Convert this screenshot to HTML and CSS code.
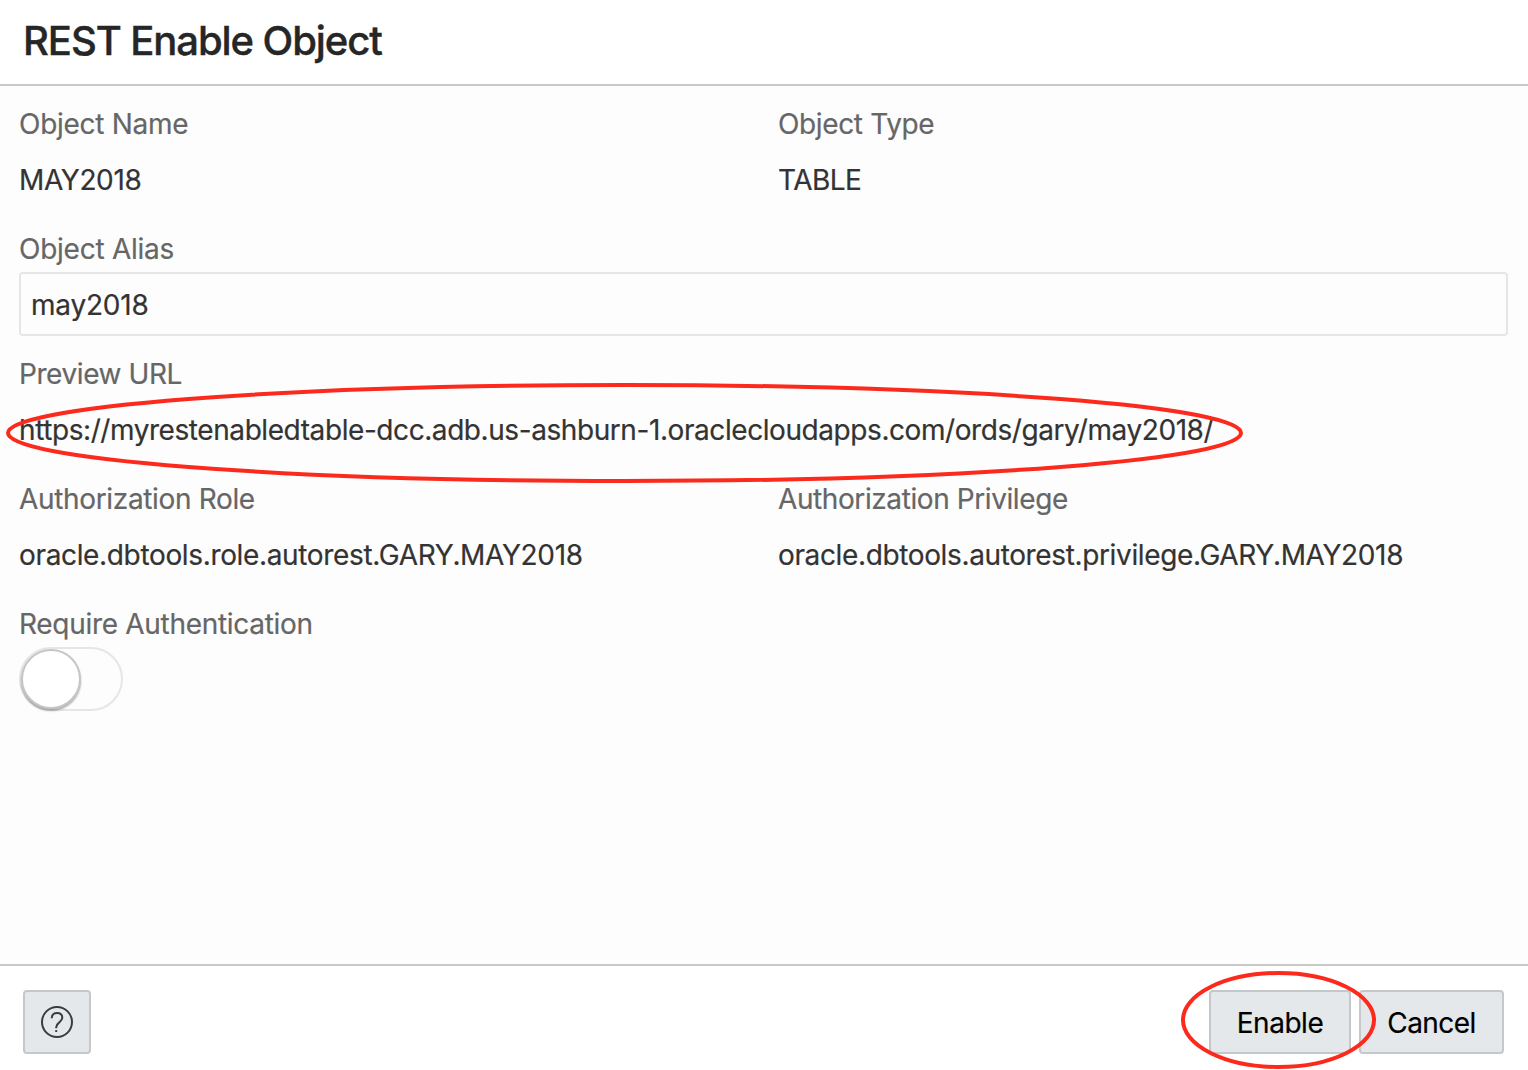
FILE: index.html
```html
<!DOCTYPE html>
<html lang="en">
<head>
<meta charset="utf-8">
<title>REST Enable Object</title>
<link rel="stylesheet" href="styles.css">
</head>
<body>
<div class="dialog">
  <header class="header"><h1 class="title">REST Enable Object</h1></header>
  <main class="form">
    <div class="field">
      <div class="label label-name">Object Name</div>
      <div class="value value-name">MAY2018</div>
    </div>
    <div class="field">
      <div class="label label-type">Object Type</div>
      <div class="value value-type">TABLE</div>
    </div>
    <div class="field wide">
      <label class="label label-alias" for="alias">Object Alias</label>
      <input class="input" id="alias" type="text" value="may2018">
    </div>
    <div class="field wide">
      <div class="label label-url">Preview URL</div>
      <div class="value value-url">https://myrestenabledtable-dcc.adb.us-ashburn-1.oraclecloudapps.com/ords/gary/may2018/</div>
      <svg class="mark mark-url" viewBox="0 0 1240 102"><ellipse cx="619.5" cy="51" rx="616.5" ry="48"/></svg>
    </div>
    <div class="field">
      <div class="label label-role">Authorization Role</div>
      <div class="value value-role">oracle.dbtools.role.autorest.GARY.MAY2018</div>
    </div>
    <div class="field">
      <div class="label label-privilege">Authorization Privilege</div>
      <div class="value value-privilege">oracle.dbtools.autorest.privilege.GARY.MAY2018</div>
    </div>
    <div class="field wide">
      <div class="label label-auth">Require Authentication</div>
      <div class="switch"><span class="thumb"></span></div>
    </div>
  </main>
  <footer class="footer">
    <button class="button help" aria-label="Help">
      <svg class="help-icon" viewBox="0 0 32 32"><circle cx="16" cy="16" r="15"/><path d="M10.8 12.3V11.7C10.8 8.9 13 7.1 16 7.1C19.2 7.1 21.3 9 21.3 11.8C21.3 16.3 15.2 16.5 15.2 21.2V22.2"/><path d="M15.2 24.1V26"/></svg>
    </button>
    <div class="actions">
      <button class="button enable">Enable</button>
      <button class="button cancel">Cancel</button>
      <svg class="mark mark-enable" viewBox="0 0 196 100"><ellipse cx="98.5" cy="50" rx="95.5" ry="47"/></svg>
    </div>
  </footer>
</div>
</body>
</html>
```
FILE: styles.css
```css
* { box-sizing: border-box; }
body {
  margin: 0;
  font-family: Inter, "Liberation Sans", sans-serif;
  font-size: 28px;
  -webkit-text-stroke: 0.2px;
  color: #333;
  background: #fff;
}
.dialog { display: flex; flex-direction: column; height: 1070px; overflow: hidden; }
.header { height: 86px; padding: 17px 23px 0; border-bottom: 2px solid #c9c9c9; }
.title {
  margin: 0;
  font-size: 40px;
  line-height: 48px;
  font-weight: 500;
  -webkit-text-stroke: 0.4px;
  letter-spacing: -1.08px;
  color: #262626;
  white-space: nowrap;
}
.form {
  flex: 1;
  display: grid;
  grid-template-columns: 730px 730px;
  grid-auto-rows: 125px;
  column-gap: 29px;
  padding: 20px 19px 0;
  background: #fdfdfd;
}
.field { position: relative; display: flex; flex-direction: column; align-items: flex-start; white-space: nowrap; }
.wide { grid-column: 1 / -1; }
.label { flex: none; height: 41px; line-height: 37px; color: #666; }
.value { height: 64px; line-height: 67px; }
.label-name { letter-spacing: -0.28px; }
.value-name { letter-spacing: -0.38px; }
.label-type { letter-spacing: -0.36px; }
.value-type { letter-spacing: -0.55px; }
.label-alias { letter-spacing: -0.25px; }
.label-url { letter-spacing: -0.42px; }
.value-url { letter-spacing: -0.425px; }
.label-role { letter-spacing: -0.34px; }
.value-role { letter-spacing: -0.345px; }
.label-privilege { letter-spacing: -0.41px; }
.value-privilege { letter-spacing: -0.365px; }
.label-auth { letter-spacing: -0.3px; }
.input {
  width: 1489px;
  height: 64px;
  margin: 0;
  padding: 2px 10px 0;
  border: 2px solid #e6e6e6;
  border-radius: 4px;
  background: #fdfdfd;
  font: inherit;
  letter-spacing: -0.22px;
  color: #333;
  outline: 0;
}
.switch { width: 104px; height: 64px; border: 2px solid #e6e6e6; border-radius: 32px; }
.thumb {
  display: block;
  width: 60px;
  height: 60px;
  border: 2px solid #c4c6c7;
  border-radius: 50%;
  background: #fff;
  box-shadow: 0 2px 2px rgba(0, 0, 0, .3);
}
.footer {
  display: flex;
  justify-content: space-between;
  height: 106px;
  padding: 24px 24px 0 23px;
  border-top: 2px solid #c9c9c9;
}
.button {
  height: 64px;
  padding: 2px 0 0;
  border: 2px solid #c5c8ca;
  border-radius: 4px;
  background: #e4e8eb;
  font: inherit;
  color: #000;
}
.help { display: grid; place-items: center; width: 68px; padding: 0; }
.help-icon { width: 32px; height: 32px; fill: none; stroke: #3c3c3c; stroke-width: 2; }
.actions { position: relative; display: flex; gap: 8px; }
.enable { width: 142px; letter-spacing: -0.45px; }
.cancel { width: 145px; letter-spacing: -0.55px; }
.mark { position: absolute; fill: none; stroke: #fc2a1c; stroke-width: 4; pointer-events: none; }
.mark-url { left: -14px; top: 26px; width: 1240px; height: 102px; }
.mark-enable { left: -29px; top: -20px; width: 196px; height: 100px; }
```
